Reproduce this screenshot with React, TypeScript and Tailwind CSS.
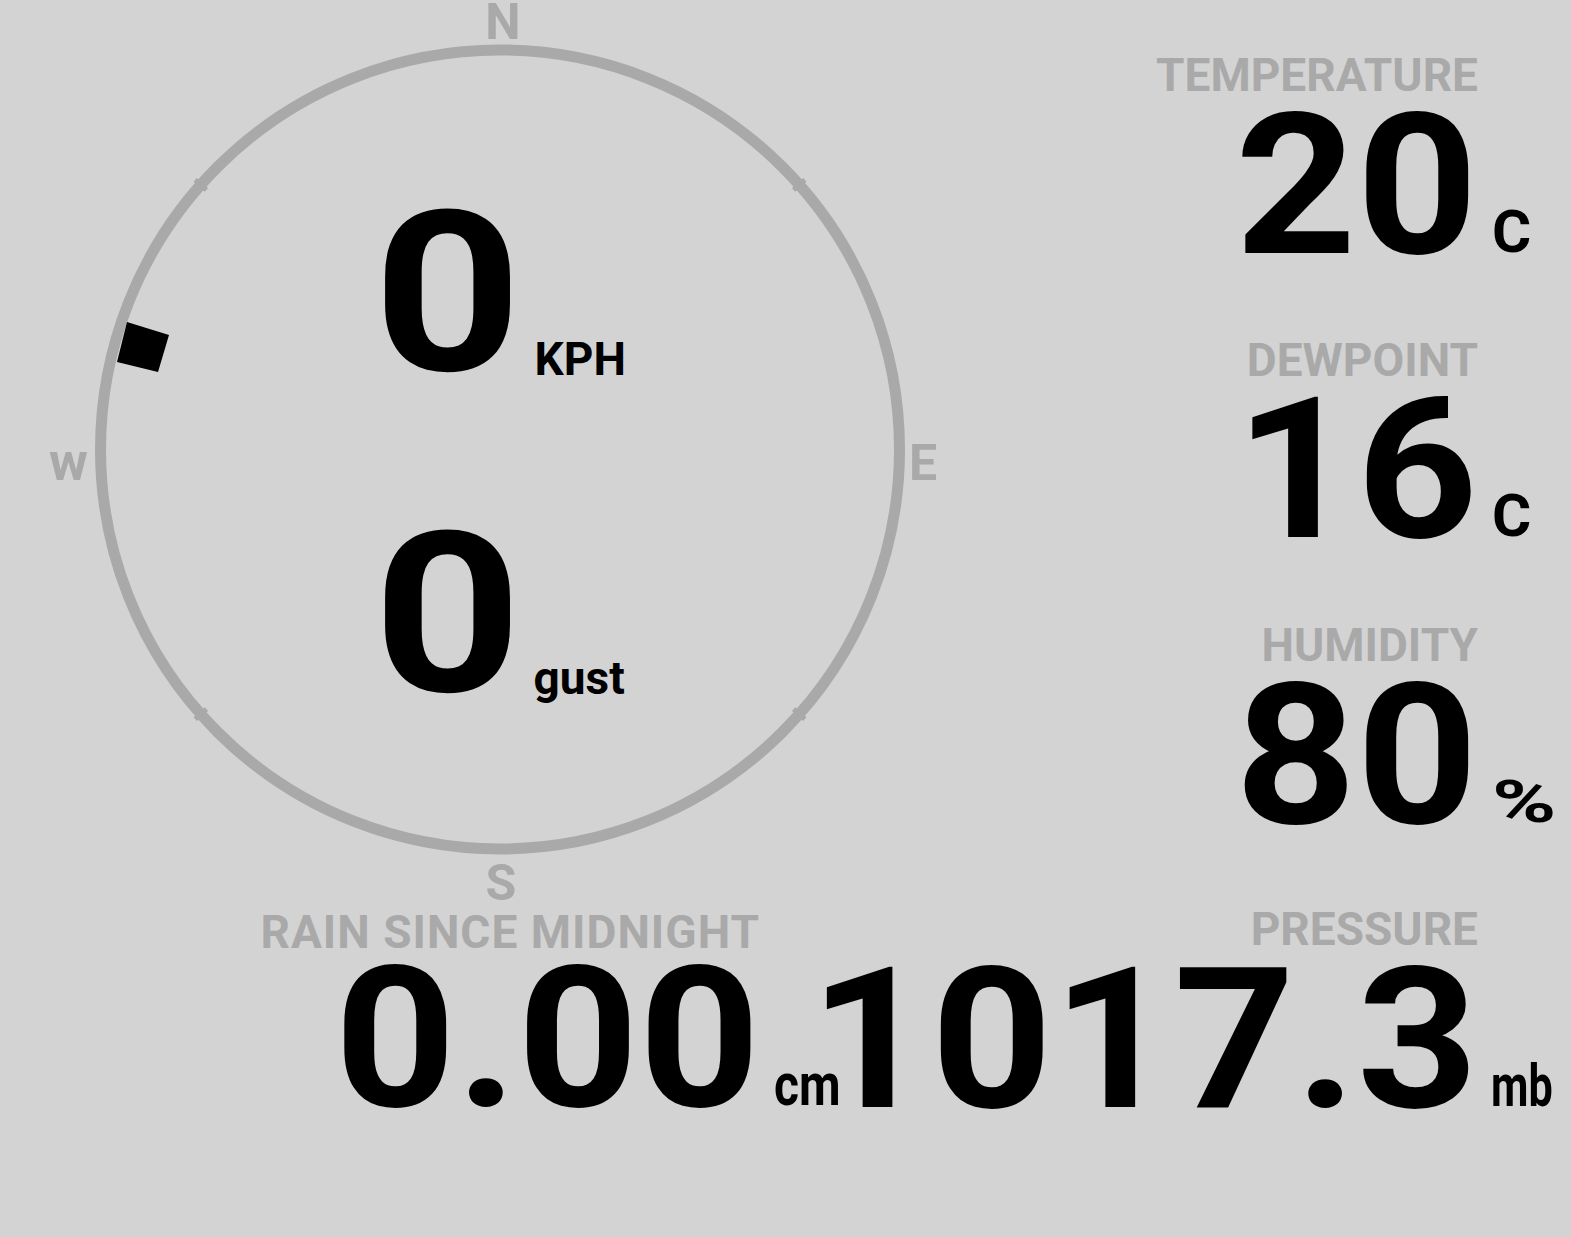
import React from "react";

const GRAY = "#a9a9a9";
const CX = 500;
const CY = 449.5;

function polar(deg: number, r: number): [number, number] {
  const a = (deg * Math.PI) / 180;
  return [CX + r * Math.sin(a), CY - r * Math.cos(a)];
}

function Compass() {
  const ticks = [48.5, 131.5, 228.5, 311.5];
  return (
    <svg
      className="absolute inset-0"
      width={1000}
      height={909}
      viewBox="0 0 1000 909"
    >
      <circle cx={CX} cy={CY} r={399.5} fill="none" stroke={GRAY} strokeWidth={11} />
      {ticks.map((d) => {
        const [x1, y1] = polar(d, 392);
        const [x2, y2] = polar(d, 407);
        return (
          <line key={d} x1={x1} y1={y1} x2={x2} y2={y2} stroke={GRAY} strokeWidth={5} />
        );
      })}
      <polygon points="127,322 169,335 158,372 117,362" fill="#000" />
      <g
        fill={GRAY}
        fontFamily="Roboto, 'Liberation Sans', sans-serif"
        fontWeight={700}
        fontSize={50}
      >
        <text x={503} y={39} textAnchor="middle">N</text>
        <text x={909} y={480}>E</text>
        <text x={501} y={900} textAnchor="middle">S</text>
        <text x={49} y={480} fontSize={53}>w</text>
      </g>
    </svg>
  );
}

function Value({
  value,
  unit,
  className,
  unitClass,
}: {
  value: string;
  unit: string;
  className: string;
  unitClass: string;
}) {
  return (
    <div className={"relative text-[196px] leading-none whitespace-nowrap " + className}>
      <span className="block origin-right scale-x-[1.08]">{value}</span>
      <span
        className={
          "absolute left-full bottom-[22px] text-[60px] leading-none origin-left " + unitClass
        }
      >
        {unit}
      </span>
    </div>
  );
}

function Label({ text, className }: { text: string; className: string }) {
  return (
    <div className={"text-[46px] leading-none text-[#a9a9a9] whitespace-nowrap " + className}>
      {text}
    </div>
  );
}

export default function App() {
  return (
    <div className="w-[1571px] h-[1237px] bg-[#d3d3d3] overflow-hidden font-['Roboto','Liberation_Sans',sans-serif] font-bold text-black flex">
      <div className="w-[1000px] shrink-0 flex flex-col">
        <div className="relative h-[909px] pt-[182px] pl-[373px]">
          <Compass />
          <div className="relative flex items-baseline">
            <span className="inline-block origin-left scale-x-[1.16] text-[224px] leading-none">0</span>
            <span className="ml-[33px] text-[46px] leading-none translate-y-[5px]">KPH</span>
          </div>
          <div className="relative mt-[97px] flex items-baseline">
            <span className="inline-block origin-left scale-x-[1.16] text-[224px] leading-none">0</span>
            <span className="ml-[32px] text-[46px] leading-none translate-y-[3px]">gust</span>
          </div>
        </div>
        <div className="w-[760px] flex flex-col items-end">
          <Label text="RAIN SINCE MIDNIGHT" className="tracking-[1px]" />
          <Value
            value="0.00"
            unit="cm"
            className="mt-[-14px]"
            unitClass="ml-[14px] scale-x-[0.8]"
          />
        </div>
      </div>
      <div className="w-[571px] min-w-0 shrink-0 flex flex-col items-end pr-[93px] pt-[52px]">
        <Label text="TEMPERATURE" className="" />
        <Value value="20" unit="C" className="mt-[-10px]" unitClass="ml-[14px]" />
        <Label text="DEWPOINT" className="mt-[53px]" />
        <Value value="16" unit="C" className="mt-[-11px]" unitClass="ml-[14px]" />
        <Label text="HUMIDITY" className="mt-[54px]" />
        <Value value="80" unit="%" className="mt-[-10px]" unitClass="ml-[14px] scale-x-[1.45]" />
        <Label text="PRESSURE" className="mt-[52px]" />
        <Value
          value="1017.3"
          unit="mb"
          className="mt-[-10px]"
          unitClass="ml-[13px] scale-x-[0.72]"
        />
      </div>
    </div>
  );
}
